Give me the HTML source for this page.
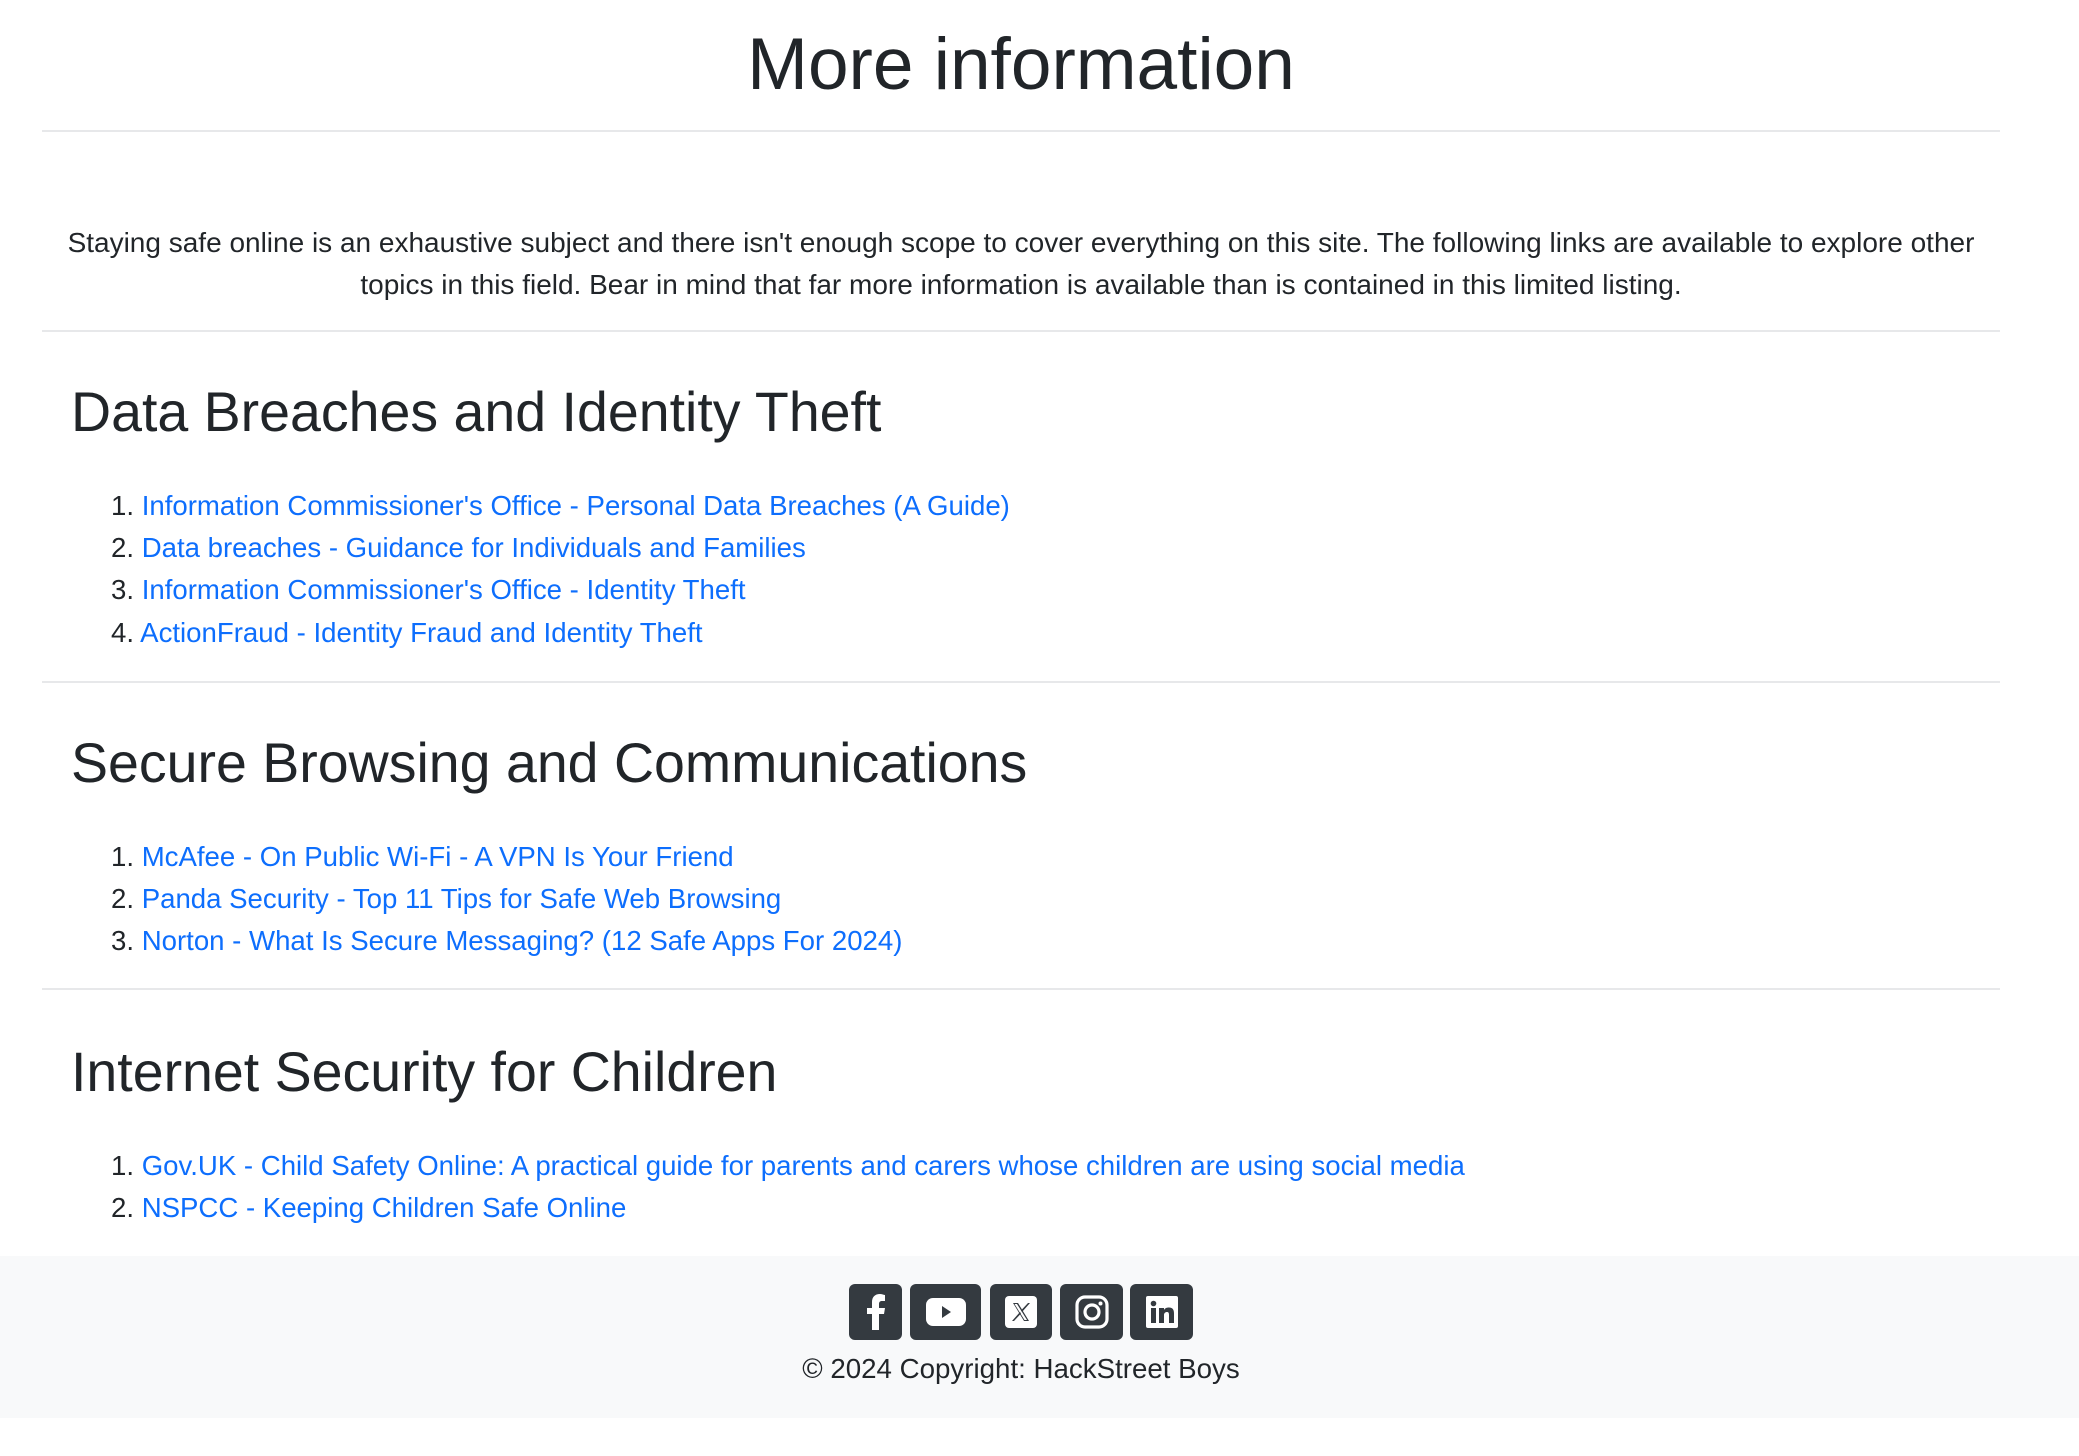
<!DOCTYPE html>
<html><head><meta charset="utf-8">
<style>
html,body{margin:0;padding:0;background:#fff;width:2079px;height:1456px;overflow:hidden;font-family:"Liberation Sans",sans-serif;color:#212529;}
.a{position:absolute;white-space:nowrap;}
.hr{position:absolute;left:42px;width:1958px;height:2px;background:#e7e8ea;}
.t{left:0;width:2042px;text-align:center;}
.h2{left:71px;font-size:55.5px;line-height:60px;}
.li{left:111px;font-size:27.6px;line-height:30px;}
.li a{color:#0d6efd;text-decoration:none;}
.foot{position:absolute;left:0;top:1256px;width:2079px;height:162px;background:#f8f9fa;}
.ic{position:absolute;top:1284px;height:56px;background:#343a40;border-radius:6px;}
.ic svg{position:absolute;left:50%;top:50%;transform:translate(-50%,-50%);}
</style></head><body>
<div class="a t" style="top:22px;font-size:73px;line-height:86px;">More information</div>
<div class="hr" style="top:130px"></div>
<div class="a t" style="top:222px;font-size:28px;line-height:42px;">Staying safe online is an exhaustive subject and there isn't enough scope to cover everything on this site. The following links are available to explore other<br>topics in this field. Bear in mind that far more information is available than is contained in this limited listing.</div>
<div class="hr" style="top:330px"></div>

<div class="a h2" style="top:382px">Data Breaches and Identity Theft</div>
<div class="a li" style="top:491px">1. <a>Information Commissioner's Office - Personal Data Breaches (A Guide)</a></div>
<div class="a li" style="top:533px">2. <a>Data breaches - Guidance for Individuals and Families</a></div>
<div class="a li" style="top:575px">3. <a>Information Commissioner's Office - Identity Theft</a></div>
<div class="a li" style="top:618px">4. <a>ActionFraud - Identity Fraud and Identity Theft</a></div>
<div class="hr" style="top:681px"></div>

<div class="a h2" style="top:733px">Secure Browsing and Communications</div>
<div class="a li" style="top:842px">1. <a>McAfee - On Public Wi-Fi - A VPN Is Your Friend</a></div>
<div class="a li" style="top:884px">2. <a>Panda Security - Top 11 Tips for Safe Web Browsing</a></div>
<div class="a li" style="top:926px">3. <a>Norton - What Is Secure Messaging? (12 Safe Apps For 2024)</a></div>
<div class="hr" style="top:988px"></div>

<div class="a h2" style="top:1042px">Internet Security for Children</div>
<div class="a li" style="top:1151px">1. <a>Gov.UK - Child Safety Online: A practical guide for parents and carers whose children are using social media</a></div>
<div class="a li" style="top:1193px">2. <a>NSPCC - Keeping Children Safe Online</a></div>

<div class="foot"></div>
<div class="ic" style="left:849px;width:53px"><svg width="24" height="36" viewBox="0 0 24 36"><path d="M15 36V20h5l1-6h-6v-4c0-2 1-3 3-3h3V1c-1 0-3-1-5-1-5 0-8 3-8 8v6H3v6h5v16z" fill="#fff"/></svg></div>
<div class="ic" style="left:910px;width:71px"><svg width="40" height="28" viewBox="0 0 40 28"><rect x="0" y="0" width="40" height="28" rx="7" fill="#fff"/><path d="M16 8l9 6-9 6z" fill="#343a40"/></svg></div>
<div class="ic" style="left:990px;width:62px"><svg width="32" height="32" viewBox="0 0 32 32"><rect width="32" height="32" rx="4" fill="#fff"/><path d="M8 7h5l11 18h-5z" fill="#343a40"/><path d="M9.5 8h2.5l10 16h-2.5z" fill="#fff"/><path d="M23 7h2L17 16l-1-1.5zM9 25h-2l8-9 1 1.5z" fill="#343a40"/></svg></div>
<div class="ic" style="left:1060px;width:63px"><svg width="34" height="34" viewBox="0 0 34 34"><rect x="2" y="2" width="30" height="30" rx="8" fill="none" stroke="#fff" stroke-width="3.2"/><circle cx="17" cy="17" r="7" fill="none" stroke="#fff" stroke-width="3.2"/><circle cx="25.5" cy="8.5" r="2" fill="#fff"/></svg></div>
<div class="ic" style="left:1130px;width:63px"><svg width="32" height="32" viewBox="0 0 32 32"><rect width="32" height="32" rx="2" fill="#fff"/><rect x="5" y="12" width="5" height="15" fill="#343a40"/><circle cx="7.5" cy="7.5" r="2.8" fill="#343a40"/><path d="M13 12h5v2c1-2 3-2.5 5-2.5 4 0 5 2.5 5 6V27h-5v-8c0-2-.5-3-2-3s-3 1-3 3v8h-5z" fill="#343a40"/></svg></div>
<div class="a t" style="top:1352px;font-size:27.7px;line-height:34px;">© 2024 Copyright: HackStreet Boys</div>
</body></html>
